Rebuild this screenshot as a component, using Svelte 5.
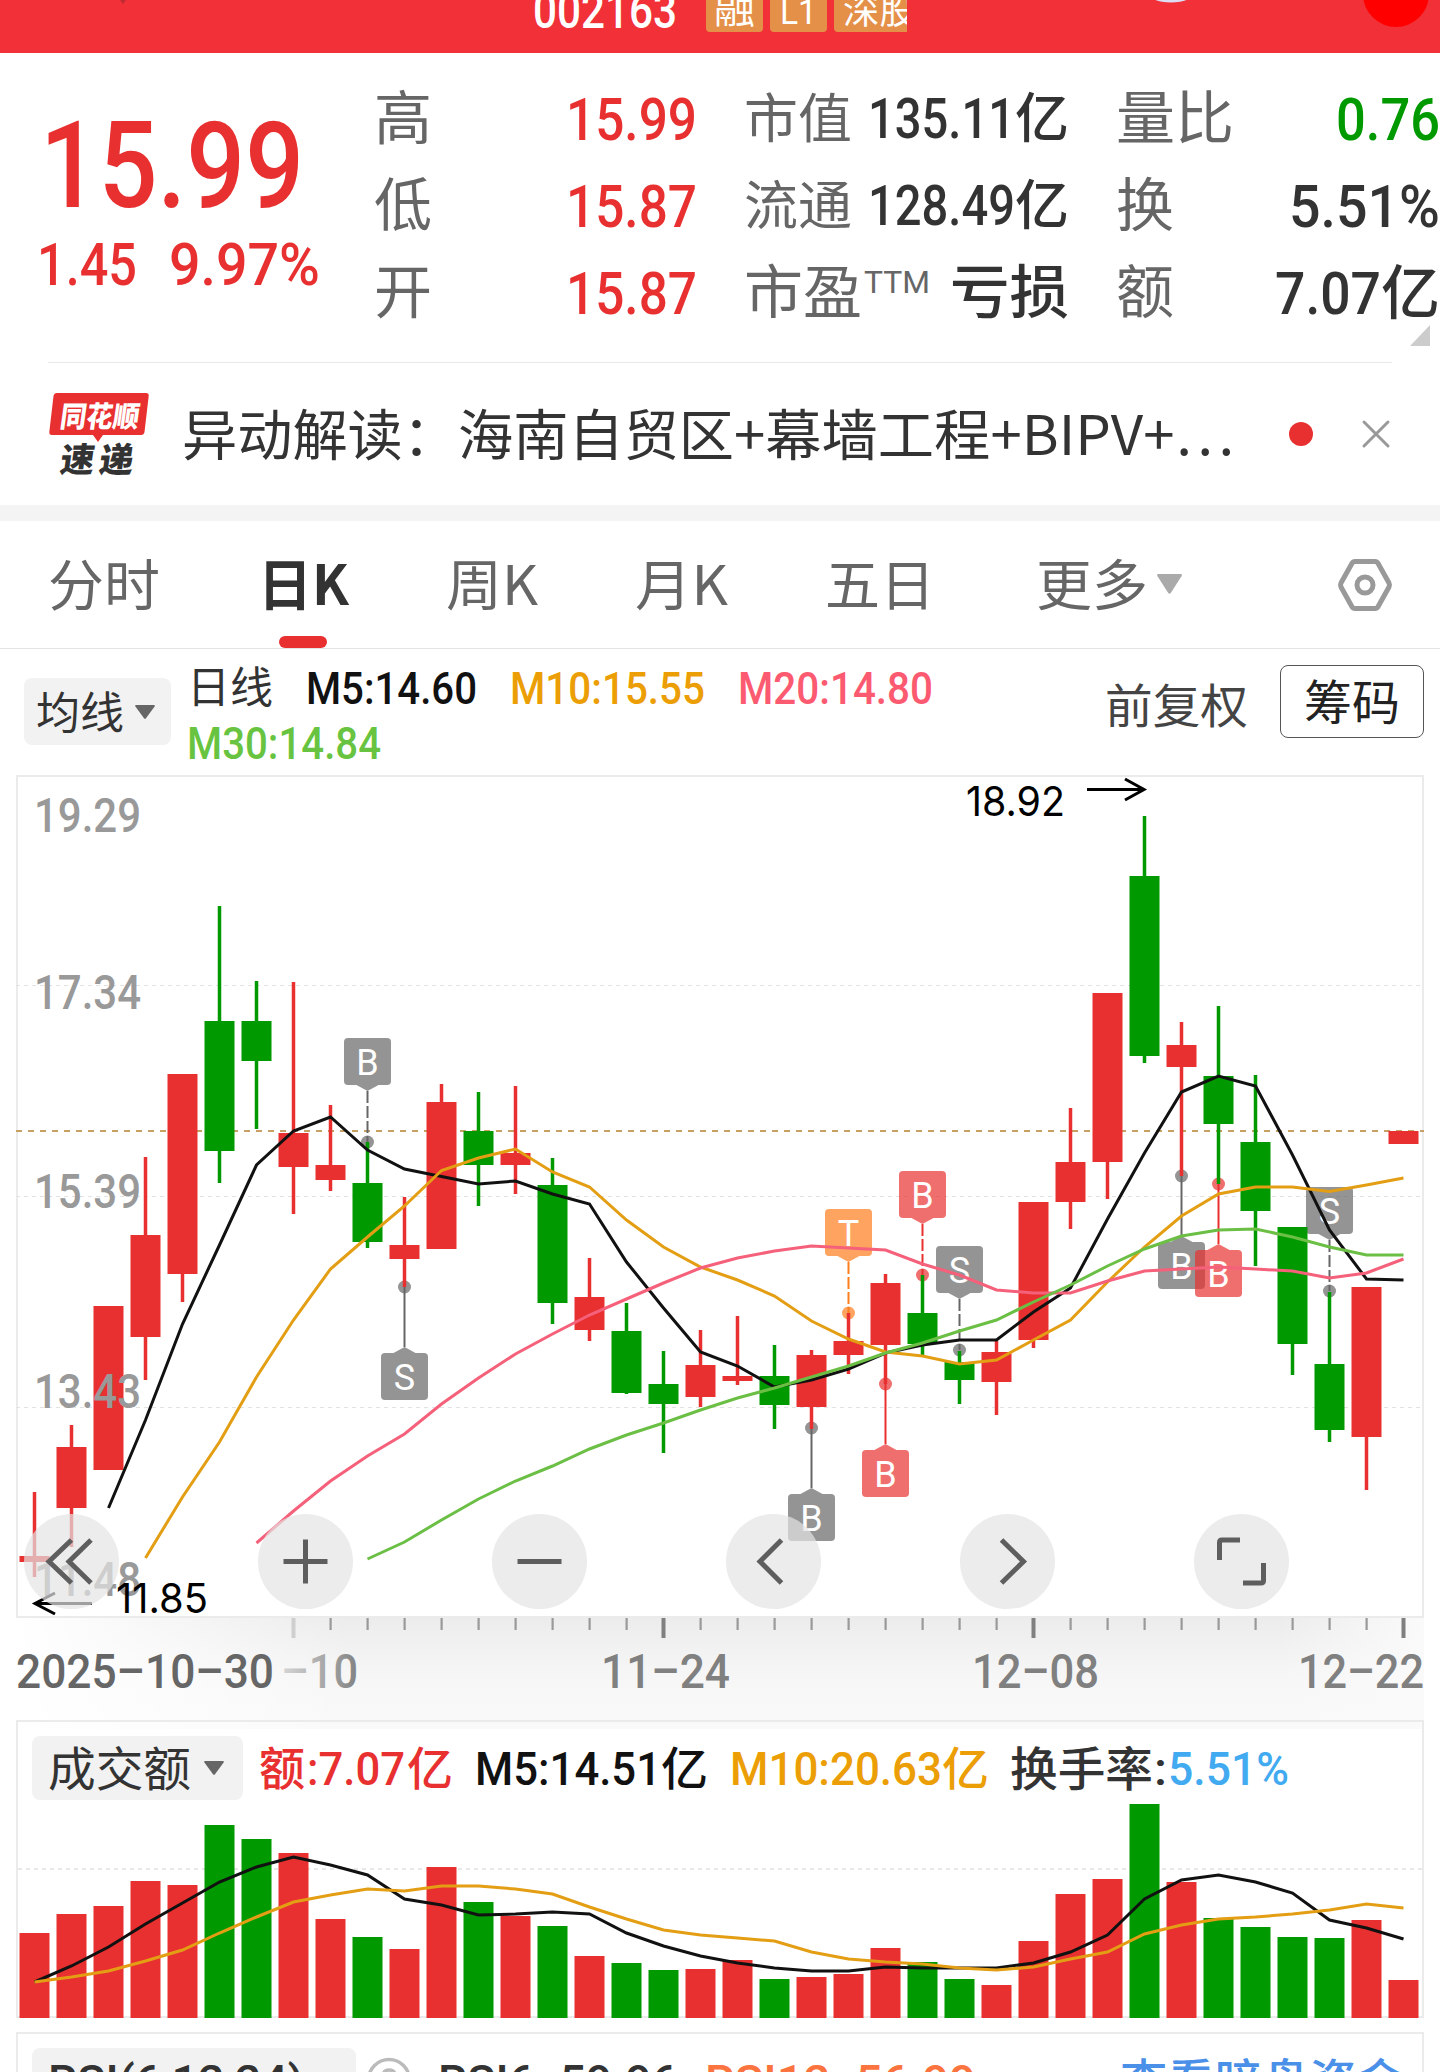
<script lang="ts">
  const RED = '#e83030';
  const GREEN = '#009900';
  const STEP = 37;

  const cx = (i: number) => 34.5 + i * STEP;

  // [up, high, body top, body bottom, low, volume top]
  const candles: [number, number, number, number, number, number][] = [
    [1, 1492, 1556, 1562, 1577, 1933],
    [1, 1425, 1447, 1508, 1547, 1914],
    [1, 1306, 1306, 1470, 1470, 1906],
    [1, 1157, 1235, 1337, 1380, 1881],
    [1, 1074, 1074, 1274, 1302, 1885],
    [0, 906, 1021, 1151, 1183, 1825],
    [0, 981, 1021, 1061, 1129, 1839],
    [1, 982, 1133, 1167, 1214, 1853],
    [1, 1105, 1165, 1180, 1191, 1919],
    [0, 1142, 1183, 1242, 1248, 1937],
    [1, 1197, 1245, 1259, 1287, 1949],
    [1, 1084, 1102, 1249, 1249, 1867],
    [0, 1092, 1131, 1165, 1206, 1902],
    [1, 1086, 1153, 1165, 1194, 1916],
    [0, 1158, 1185, 1303, 1324, 1926],
    [1, 1258, 1297, 1330, 1341, 1956],
    [0, 1303, 1331, 1393, 1394, 1963],
    [0, 1351, 1384, 1404, 1453, 1970],
    [1, 1330, 1365, 1397, 1407, 1969],
    [1, 1316, 1376, 1381, 1385, 1960],
    [0, 1345, 1376, 1405, 1429, 1979],
    [1, 1350, 1355, 1407, 1429, 1977],
    [1, 1313, 1341, 1355, 1374, 1974],
    [1, 1274, 1283, 1345, 1384, 1948],
    [0, 1275, 1313, 1344, 1357, 1962],
    [0, 1351, 1362, 1380, 1404, 1979],
    [1, 1341, 1352, 1382, 1415, 1985],
    [1, 1202, 1202, 1340, 1348, 1941],
    [1, 1108, 1162, 1202, 1229, 1894],
    [1, 993, 993, 1162, 1199, 1879],
    [0, 816, 876, 1056, 1063, 1804],
    [1, 1022, 1045, 1067, 1176, 1882],
    [0, 1006, 1076, 1124, 1184, 1918],
    [0, 1075, 1142, 1211, 1266, 1927],
    [0, 1227, 1227, 1344, 1375, 1937],
    [0, 1292, 1364, 1430, 1442, 1938],
    [1, 1287, 1287, 1437, 1490, 1920],
    [1, 1131, 1131, 1144, 1144, 1980]
  ];

  const maLines = [
    { color: '#111111', from: 2, ys: [1508, 1420, 1324, 1245, 1165, 1131, 1117, 1150, 1169, 1176.5, 1184, 1181, 1194, 1204, 1262, 1308, 1352, 1366, 1387, 1380, 1369, 1353, 1345, 1340, 1340, 1312, 1288, 1219, 1153, 1092, 1076, 1086, 1155, 1230, 1279, 1280] },
    { color: '#e39e14', from: 3, ys: [1558, 1497, 1442, 1377, 1320, 1269, 1237, 1206, 1170.5, 1158, 1149, 1172, 1187, 1220, 1247, 1267, 1280, 1296, 1321, 1339, 1352, 1356, 1364, 1360, 1340, 1320, 1282, 1247, 1216, 1194, 1187, 1187, 1191.5, 1185, 1178] },
    { color: '#f5607a', from: 6, ys: [1543, 1511, 1481, 1456, 1434, 1404, 1378, 1354, 1334, 1315, 1299, 1283, 1268, 1258, 1251, 1246, 1248, 1250, 1264, 1275, 1290, 1293, 1293, 1281, 1271, 1269, 1267, 1269, 1271, 1278, 1273, 1259] },
    { color: '#6bbf45', from: 9, ys: [1559, 1542, 1520, 1499, 1481, 1466, 1449, 1435, 1423, 1410, 1398, 1388, 1377, 1366, 1353, 1343, 1331, 1320, 1302, 1285, 1266, 1249, 1236, 1230, 1229, 1237, 1247, 1255, 1255] }
  ];

  const volLines = [
    { color: '#111111', from: 0, ys: [1982, 1966, 1947, 1924, 1903, 1882, 1867, 1857, 1865, 1875, 1899, 1905, 1915, 1914, 1912, 1914, 1933, 1946, 1956, 1963, 1968, 1971, 1971, 1967, 1968, 1968, 1968, 1963, 1952, 1935, 1899, 1880, 1875, 1882, 1893, 1920, 1928, 1939] },
    { color: '#e39e14', from: 0, ys: [1982, 1977, 1971, 1961, 1950, 1933, 1917, 1902, 1895, 1889, 1891, 1886, 1886, 1889, 1894, 1907, 1919, 1930, 1935, 1938, 1941, 1952, 1959, 1962, 1964, 1968, 1970, 1967, 1959, 1952, 1934, 1925, 1919, 1917, 1914, 1910, 1904, 1908] }
  ];

  const markers = [
    { i: 9, letter: 'B', top: 1038, dot: 1142, color: '#666666' },
    { i: 10, letter: 'S', top: 1353, dot: 1287, color: '#666666' },
    { i: 21, letter: 'B', top: 1494, dot: 1428, color: '#666666' },
    { i: 22, letter: 'T', top: 1209, dot: 1313, color: '#fe7e1c' },
    { i: 23, letter: 'B', top: 1450, dot: 1384, color: '#e83030' },
    { i: 24, letter: 'B', top: 1171, dot: 1275, color: '#e83030' },
    { i: 25, letter: 'S', top: 1246, dot: 1350, color: '#666666' },
    { i: 31, letter: 'B', top: 1242, dot: 1176, color: '#666666' },
    { i: 32, letter: 'B', top: 1250, dot: 1184, color: '#e83030' },
    { i: 35, letter: 'S', top: 1187, dot: 1291, color: '#666666' }
  ];

  const yLabels = [
    ['19.29', 832],
    ['17.34', 1009],
    ['15.39', 1208],
    ['13.43', 1408],
    ['11.48', 1596]
  ];

  const ticks = Array.from({ length: 31 }, (_, k) => k + 7);

  const buttons = [
    { x: 71.5, d: 'M0 -21.5 L-22.5 0 L0 21.5 M19.5 -21.5 L-2.5 0 L19.5 21.5' },
    { x: 305.5, d: 'M-22 0 H22 M0 -22 V22' },
    { x: 539.5, d: 'M-22 0 H22' },
    { x: 773.5, d: 'M8 -21.5 L-13.5 0 L8 21.5' },
    { x: 1007.5, d: 'M-6 -21.5 L16 0 L-6 21.5' },
    { x: 1241.5, d: 'M-1.5 -21.5 H-19.5 Q-22 -21.5 -22 -19 V-1.5 M22 1.5 V19 Q22 21.5 19.5 21.5 H1.5' }
  ];

  const points = (line: { from: number; ys: number[] }) =>
    line.ys.map((y, k) => `${cx(line.from + k)},${y}`).join(' ');
</script>

{#snippet fit(text: string, width: number, size: number, cls = '')}
  <svg class="fit {cls}" {width} height={size} font-size={size}>
    <text x="0" y={size * 0.88} textLength={width} lengthAdjust="spacingAndGlyphs">{text}</text>
  </svg>
{/snippet}

{#snippet caret(w: number, h: number, color: string)}
  <svg class="caret" width={w} height={h} viewBox="0 0 20 14" preserveAspectRatio="none">
    <path d="M1 0H19Q20.500 0 19.600 1.500L11 13.300Q10 14.300 9 13.300L0.400 1.500Q-0.500 0 1 0Z" fill={color} />
  </svg>
{/snippet}

<div class="screen">
  <header>
    <div class="title">
      {@render fit('002163', 144, 50, 'code white medium')}
      <div class="tags">
        <span class="tag">{@render fit('融', 41, 37, 'white')}</span>
        <span class="tag">{@render fit('L1', 37, 35, 'white')}</span>
        <span class="tag cut">{@render fit('深股', 73, 37, 'white')}</span>
      </div>
    </div>
    <svg class="header-bits" width="1440" height="53">
      <path d="M120 0H126L123 4Z" fill="#c02a35" />
      <ellipse cx="1171" cy="-8" rx="24" ry="10.500" fill="#dcdcf2" />
      <circle cx="1396" cy="-6" r="33" fill="#ff0000" />
    </svg>
  </header>

  <section class="quote">
    <div class="price">
      {@render fit('15.99', 264, 120, 'red medium')}
      <div class="change">
        {@render fit('1.45', 100, 59, 'red medium')}
        {@render fit('9.97%', 151, 59, 'red medium')}
      </div>
    </div>
    <div class="col c2">
      <div class="row">{@render fit('高', 58, 58, 'grey')}{@render fit('15.99', 131, 60, 'red medium')}</div>
      <div class="row">{@render fit('低', 58, 58, 'grey')}{@render fit('15.87', 131, 60, 'red medium')}</div>
      <div class="row">{@render fit('开', 58, 58, 'grey')}{@render fit('15.87', 131, 60, 'red medium')}</div>
    </div>
    <div class="col c3">
      <div class="row">
        {@render fit('市值', 108, 53, 'grey')}
        <span class="value">{@render fit('135.11', 147, 55, 'dark medium')}{@render fit('亿', 54, 54, 'dark medium')}</span>
      </div>
      <div class="row">
        {@render fit('流通', 108, 53, 'grey')}
        <span class="value">{@render fit('128.49', 147, 55, 'dark medium')}{@render fit('亿', 54, 54, 'dark medium')}</span>
      </div>
      <div class="row">
        <span class="value">{@render fit('市盈', 118, 58, 'grey')}{@render fit('TTM', 66, 31, 'grey ttm')}</span>
        {@render fit('亏损', 119, 58, 'dark medium')}
      </div>
    </div>
    <div class="col c4">
      <div class="row">{@render fit('量比', 118, 58, 'grey')}{@render fit('0.76', 104, 60, 'green medium')}</div>
      <div class="row">{@render fit('换', 58, 58, 'grey')}{@render fit('5.51%', 151, 60, 'dark medium')}</div>
      <div class="row">
        {@render fit('额', 58, 58, 'grey')}
        <span class="value">{@render fit('7.07', 106, 60, 'dark medium')}{@render fit('亿', 59, 59, 'dark medium')}</span>
      </div>
    </div>
    <svg class="corner" width="20" height="21"><path d="M20 0V21H0Z" fill="#cccccc" /></svg>
  </section>

  <section class="news">
    <svg class="logo" width="100" height="82">
      <path d="M8 0H97Q100 0 99.700 3L95.500 39Q95 42 92 42H54L49 49L44 42H3Q0 42 0.300 39L4.500 3Q5 0 8 0Z" fill={RED} />
      <text class="logo-text" transform="translate(10 33.500) skewX(-8)" font-size="29" textLength="79" lengthAdjust="spacingAndGlyphs" fill="#fff">同花顺</text>
      <text class="logo-text" transform="translate(10 79) skewX(-8)" font-size="34" fill="#333">速</text>
      <text class="logo-text" transform="translate(49 79) skewX(-8)" font-size="34" fill="#333">递</text>
    </svg>
    <div class="headline">
      {@render fit('异动解读：海南自贸区', 552, 55, 'dark cjk')}
      {@render fit('+幕墙工程+BIPV+…', 500, 55, 'dark cjk')}
    </div>
    <span class="dot"></span>
    <svg class="close" width="28" height="28"><path d="M2 2L26 26M26 2L2 26" stroke="#999" stroke-width="3" stroke-linecap="round" /></svg>
  </section>

  <nav class="tabs">
    <div class="tab">{@render fit('分时', 112, 55, 'grey cjk')}</div>
    <div class="tab active">{@render fit('日K', 91, 55, 'dark cjk bold')}</div>
    <div class="tab">{@render fit('周K', 92, 55, 'grey cjk')}</div>
    <div class="tab">{@render fit('月K', 93, 55, 'grey cjk')}</div>
    <div class="tab">{@render fit('五日', 110, 55, 'grey cjk')}</div>
    <div class="tab">{@render fit('更多', 112, 55, 'grey cjk')}<span class="more">{@render caret(25, 20, '#aaaaaa')}</span></div>
    <svg class="settings" width="54" height="52" fill="none" stroke="#999" stroke-width="5">
      <path d="M17 2.500H37Q39 2.500 40 4.200L51 24Q52 26 51 28L40 47.800Q39 49.500 37 49.500H17Q15 49.500 14 47.800L3 28Q2 26 3 24L14 4.200Q15 2.500 17 2.500Z" />
      <circle cx="27" cy="26" r="8" />
    </svg>
  </nav>

  <section class="legend">
    <div class="pill ma">{@render fit('均线', 88, 44, 'dark')}{@render caret(20, 14, '#666666')}</div>
    <div class="values">
      <div class="line">
        {@render fit('日线', 86, 43, 'dark')}
        {@render fit('M5:14.60', 171, 44, 'black medium')}
        {@render fit('M10:15.55', 195, 44, 'orange medium')}
        {@render fit('M20:14.80', 195, 44, 'pink medium')}
      </div>
      <div class="line second">{@render fit('M30:14.84', 194, 44, 'lime medium')}</div>
    </div>
    <div class="adjust">{@render fit('前复权', 143, 47, 'mid')}</div>
    <div class="chips">{@render fit('筹码', 96, 48, 'ink')}</div>
  </section>

  <svg class="kline" width="1440" height="950" viewBox="0 770 1440 950">
    <defs>
      <linearGradient id="shade" x1="0" y1="0" x2="0" y2="1">
        <stop offset="0" stop-color="#ececec" />
        <stop offset="0.500" stop-color="#f6f6f6" />
        <stop offset="1" stop-color="#fafafa" />
      </linearGradient>
      <linearGradient id="fade-left" x1="0" y1="0" x2="1" y2="0">
        <stop offset="0" stop-color="#fff" />
        <stop offset="1" stop-color="#fff" stop-opacity="0" />
      </linearGradient>
      <linearGradient id="fade-right" x1="0" y1="0" x2="1" y2="0">
        <stop offset="0" stop-color="#fafafa" stop-opacity="0" />
        <stop offset="1" stop-color="#fafafa" />
      </linearGradient>
      <linearGradient id="fade-date" gradientUnits="userSpaceOnUse" x1="280" y1="0" x2="360" y2="0">
        <stop offset="0" stop-color="#d8d8d8" />
        <stop offset="1" stop-color="#808080" />
      </linearGradient>
    </defs>

    <rect x="16" y="1618" width="1408" height="111" fill="url(#shade)" />
    <rect x="15" y="1618" width="335" height="112" fill="url(#fade-left)" />
    <rect x="1280" y="1618" width="144" height="111" fill="url(#fade-right)" />
    <rect x="17" y="776" width="1406" height="841" fill="#fff" stroke="#ebebeb" stroke-width="2" />

    {#each [985.5, 1196.5, 1407.5] as y}
      <line x1="16" x2="1422" y1={y} y2={y} stroke="#e2e2e2" stroke-dasharray="4 4" />
    {/each}
    <line x1="16" x2="1424" y1="1131" y2="1131" stroke="#c8a064" stroke-width="1.800" stroke-dasharray="6 6" />

    {#each markers as m}
      {@const x = cx(m.i)}
      {@const above = m.top < m.dot}
      {@const tip = above ? m.top + 53 : m.top - 6}
      <line x1={x} x2={x} y1={tip} y2={m.dot} stroke={m.color} stroke-width="2" stroke-dasharray={above ? '12 3' : 'none'} />
      <g fill={m.color} fill-opacity="0.700">
        <circle cx={x} cy={m.dot} r="6.500" />
        <rect x={x - 23.5} y={m.top} width="47" height="47" rx="4" />
        {#if above}
          <path d="M{x - 11} {m.top + 47}H{x + 11}L{x} {tip}Z" />
        {:else}
          <path d="M{x - 11} {m.top}H{x + 11}L{x} {tip}Z" />
        {/if}
      </g>
      <text class="letter" {x} y={m.top + 37}>{m.letter}</text>
    {/each}

    {#each candles as [up, high, top, bottom, low], i}
      <rect x={cx(i) - 1.75} y={high} width="3.500" height={low - high} fill={up ? RED : GREEN} />
      <rect x={cx(i) - 15} y={top} width="30" height={bottom - top} fill={up ? RED : GREEN} />
    {/each}

    {#each maLines as line}
      <polyline points={points(line)} fill="none" stroke={line.color} stroke-width="3" />
    {/each}

    {#each yLabels as [label, y]}
      <text class="axis-y" x="34" {y} textLength="107" lengthAdjust="spacingAndGlyphs">{label}</text>
    {/each}

    <text class="extreme" x="966" y="816" textLength="99" lengthAdjust="spacingAndGlyphs">18.92</text>
    <path d="M1087 789.500H1144M1125 779L1144 789.500L1125 800" class="arrow" />
    <path d="M92 1603.500H35M55 1593L35 1603.500L55 1614" class="arrow" />

    {#each buttons as b}
      <g transform="translate({b.x} 1561.500)">
        <circle r="47.500" fill="#e4e4e4" fill-opacity="0.700" />
        <path d={b.d} fill="none" stroke="#5e5e5e" stroke-width="5" />
      </g>
    {/each}
    <text class="extreme" x="116" y="1613" textLength="92" lengthAdjust="spacingAndGlyphs">11.85</text>

    {#each ticks as i}
      {#if i % 10 === 7}
        <rect x={cx(i) - 2} y="1618" width="4" height="20" fill={i === 7 ? '#cfcfcf' : '#808080'} />
      {:else}
        <rect x={cx(i) - 1} y="1618" width="2.200" height="12" fill="#999999" />
      {/if}
    {/each}

    <g class="dates">
      <text x="16" y="1688" textLength="258" lengthAdjust="spacingAndGlyphs" fill="#666666">2025–10–30</text>
      <text x="281" y="1688" textLength="77" lengthAdjust="spacingAndGlyphs" fill="url(#fade-date)">–10</text>
      <text x="601" y="1688" textLength="129" lengthAdjust="spacingAndGlyphs" fill="#808080">11–24</text>
      <text x="972" y="1688" textLength="127" lengthAdjust="spacingAndGlyphs" fill="#808080">12–08</text>
      <text x="1298" y="1688" textLength="126" lengthAdjust="spacingAndGlyphs" fill="#808080">12–22</text>
    </g>
  </svg>

  <section class="panel volume">
    <div class="bar">
      <div class="pill vol">{@render fit('成交额', 143, 47, 'dark')}{@render caret(20, 14, '#666666')}</div>
      <div class="group amount">
        {@render fit('额', 46, 46, 'red medium')}{@render fit(':7.07', 98, 46, 'red medium')}{@render fit('亿', 46, 46, 'red medium')}
      </div>
      <div class="group m5">{@render fit('M5:14.51', 186, 46, 'black medium')}{@render fit('亿', 47, 46, 'black medium')}</div>
      <div class="group m10">{@render fit('M10:20.63', 212, 46, 'orange medium')}{@render fit('亿', 47, 46, 'orange medium')}</div>
      <div class="group turnover">
        {@render fit('换手率', 143, 47, 'dark medium')}{@render fit(':', 13, 46, 'dark medium')}{@render fit('5.51%', 121, 46, 'blue medium')}
      </div>
    </div>
    <svg class="bars" width="1404" height="216" viewBox="18 1800 1404 216">
      <line x1="18" x2="1422" y1="1869" y2="1869" stroke="#e8e8e8" stroke-width="2" stroke-dasharray="4 4" />
      {#each candles as c, i}
        <rect x={cx(i) - 15} y={c[5]} width="30" height={2018 - c[5]} fill={c[0] ? RED : GREEN} />
      {/each}
      {#each volLines as line}
        <polyline points={points(line)} fill="none" stroke={line.color} stroke-width="3" />
      {/each}
    </svg>
  </section>

  <section class="panel rsi">
    <div class="bar">
      <div class="pill">{@render fit('RSI(6,12,24)', 256, 47, 'dark medium')}</div>
      <svg class="help" width="46" height="46" fill="none" stroke="#bbbbbb" stroke-width="3.500">
        <circle cx="23" cy="23" r="20.500" />
        <path d="M17 20Q17 13 23 13Q29 13 29 19Q29 23 23 26V30" />
      </svg>
      {@render fit('RSI6::59.96', 240, 47, 'dark medium')}
      {@render fit('RSI12::56.99', 271, 47, 'coral medium second')}
      {@render fit('查看暗盘资金', 284, 47, 'link medium last')}
    </div>
  </section>
</div>

<style>
  :global(body) {
    background: #fff;
    overflow: hidden;
  }
  .screen {
    width: 1440px;
    height: 2072px;
    overflow: hidden;
    font-family: Roboto, 'Noto Sans CJK SC', sans-serif;
  }
  svg {
    display: block;
    flex: none;
    overflow: visible;
  }
  .medium { font-weight: 500; }
  .bold { font-weight: 700; }
  .cjk { font-family: 'Noto Sans CJK SC', sans-serif; }
  .white { fill: #fff; }
  .red { fill: #e83030; }
  .green { fill: #009900; }
  .grey { fill: #666; }
  .dark { fill: #333; }
  .mid { fill: #444; }
  .ink { fill: #222; }
  .black { fill: #111; }
  .orange { fill: #eb9e05; }
  .pink { fill: #fb5a70; }
  .lime { fill: #68c440; }
  .blue { fill: #41aaf0; }
  .coral { fill: #fb7440; }
  .link { fill: #4a90e8; }

  header {
    position: relative;
    height: 53px;
    overflow: hidden;
    background: #f13038;
    .title {
      display: flex;
      align-items: flex-end;
      height: 32px;
      margin-left: 533px;
    }
    .code { margin-bottom: -2px; }
    .header-bits {
      position: absolute;
      inset: 0;
    }
  }
  .tags {
    display: flex;
    gap: 7px;
    width: 201px;
    margin-left: 29px;
    overflow: hidden;
  }
  .tag {
    display: flex;
    flex: none;
    align-items: flex-end;
    justify-content: center;
    box-sizing: border-box;
    width: 57px;
    height: 32px;
    padding-bottom: 4px;
    border-radius: 0 0 4px 4px;
    background: #e49048;
    &.cut {
      width: 90px;
    }
  }

  .quote {
    position: relative;
    display: flex;
    height: 309px;
    .price {
      box-sizing: border-box;
      width: 374px;
      padding: 48px 0 0 40px;
    }
    .change {
      display: flex;
      gap: 32px;
      margin: 12px 0 0 -3px;
    }
    .col {
      display: flex;
      flex-direction: column;
      gap: 27px;
      padding-top: 34px;
    }
    .c2 { width: 323px; }
    .c3 {
      width: 325px;
      margin-left: 47px;
    }
    .c4 {
      width: 324px;
      margin-left: 47px;
    }
    .row {
      display: flex;
      align-items: center;
      justify-content: space-between;
      height: 60px;
    }
    .value {
      display: flex;
      align-items: center;
    }
    .ttm {
      margin: -19px 0 0 2px;
    }
    .corner {
      position: absolute;
      left: 1410px;
      top: 272px;
    }
  }

  .news {
    display: flex;
    align-items: center;
    height: 142px;
    margin: 0 48px;
    padding-left: 1px;
    border-top: 1px solid #e8e8e8;
    .headline {
      display: flex;
      margin-left: 33px;
    }
    .dot {
      width: 24px;
      height: 24px;
      margin-left: 55px;
      border-radius: 50%;
      background: #e83030;
    }
    .close { margin-left: 49px; }
  }
  .logo-text {
    font-family: 'Noto Sans CJK SC', sans-serif;
    font-weight: 900;
  }

  .tabs {
    display: grid;
    grid-template-columns: 210px 188px 189px 190px 211px 1fr auto;
    height: 127px;
    padding: 0 48px;
    border-top: 16px solid #f4f4f4;
    border-bottom: 1px solid #e4e4e4;
    .tab {
      display: flex;
      align-items: flex-start;
      padding-top: 36px;
    }
    .active {
      flex-direction: column;
      &::after {
        content: '';
        width: 48px;
        height: 12px;
        margin: 24px 0 0 21px;
        border-radius: 6px;
        background: #e83030;
      }
    }
    .more { margin: 17px 0 0 9px; }
    .settings { margin-top: 38px; }
  }

  .pill {
    display: flex;
    align-items: center;
    box-sizing: border-box;
    border-radius: 8px;
    background: #f2f2f2;
  }
  .legend {
    display: flex;
    height: 121px;
    .ma {
      gap: 11px;
      width: 147px;
      height: 67px;
      margin: 29px 0 0 24px;
      padding-left: 12px;
    }
    .values {
      margin: 16px 0 0 16px;
    }
    .line {
      display: flex;
      gap: 33px;
    }
    .second {
      margin: 11px 0 0 0;
    }
    .adjust {
      margin: 33px 0 0 172px;
    }
    .chips {
      display: flex;
      align-items: center;
      justify-content: center;
      box-sizing: border-box;
      width: 144px;
      height: 73px;
      margin: 16px 0 0 32px;
      border: 1.5px solid #555;
      border-radius: 8px;
    }
  }

  .letter {
    font-size: 36px;
    text-anchor: middle;
    fill: #fff;
  }
  .axis-y {
    font-size: 48px;
    font-weight: 500;
    fill: #999;
  }
  .extreme {
    font-family: Inter, sans-serif;
    font-size: 41px;
  }
  .arrow {
    fill: none;
    stroke: #000;
    stroke-width: 3;
  }
  .dates {
    font-size: 48px;
    font-weight: 500;
  }

  .panel {
    position: relative;
    box-sizing: border-box;
    width: 1408px;
    margin-left: 16px;
    border: 2px solid #ebebeb;
    .bar {
      display: flex;
      align-items: center;
      height: 64px;
      padding: 14px 0 0 14px;
    }
    .pill { height: 64px; }
  }
  .volume {
    height: 298px;
    .vol {
      gap: 13px;
      width: 211px;
      padding-left: 16px;
    }
    .group { display: flex; }
    .amount {
      gap: 2px;
      margin-left: 16px;
    }
    .m5 { margin-left: 22px; }
    .m10 { margin-left: 22px; }
    .turnover {
      gap: 1px;
      margin-left: 21px;
    }
  }
  .rsi {
    height: 300px;
    margin-top: 14px;
    .pill {
      width: 324px;
      padding-left: 16px;
    }
    .help { margin: 0 26px 0 10px; }
    .second { margin-left: 27px; }
    .last { margin-left: 144px; }
  }
</style>
